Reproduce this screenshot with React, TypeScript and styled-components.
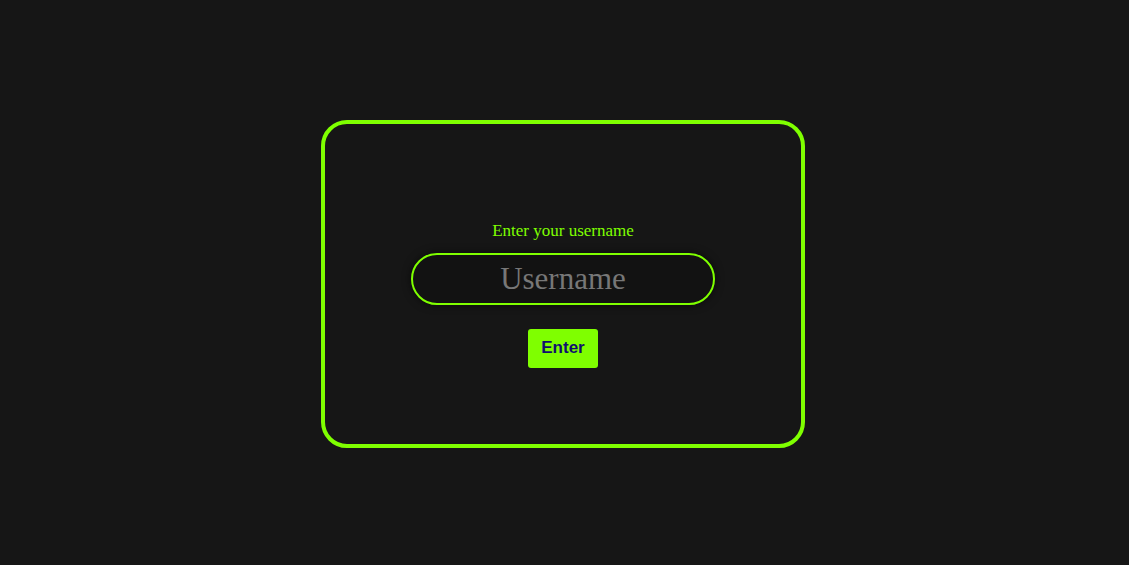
import React from "react";
import styled, { createGlobalStyle } from "styled-components";

const GlobalStyle = createGlobalStyle`
  html, body {
    margin: 0;
    padding: 0;
    background: #161616;
  }
`;

const Page = styled.div`
  width: 100vw;
  height: 100vh;
  display: flex;
  align-items: center;
  justify-content: center;
`;

const Card = styled.form`
  box-sizing: border-box;
  width: 484px;
  height: 328px;
  margin-top: 3px;
  margin-right: 3px;
  border: 4px solid #7fff00;
  border-radius: 26px;
  display: flex;
  flex-direction: column;
  align-items: center;
  justify-content: center;
  padding-top: 20px;
`;

const Label = styled.label`
  font-family: "Liberation Serif", serif;
  font-size: 17px;
  color: #7fff00;
  margin-bottom: 12px;
`;

const Input = styled.input`
  box-sizing: border-box;
  width: 304px;
  height: 52px;
  border: 2px solid #7fff00;
  border-radius: 26px;
  background: #121212;
  box-shadow: 0 0 8px rgba(0, 0, 0, 0.6);
  font-family: "Liberation Serif", serif;
  font-size: 31px;
  text-align: center;
  color: #ddd;
  outline: none;
  &::placeholder {
    color: #777;
  }
`;

const Button = styled.button`
  margin-top: 24px;
  width: 70px;
  height: 39px;
  border: none;
  border-radius: 3px;
  background: #7fff00;
  color: #10106e;
  font-family: "Liberation Sans", Arial, sans-serif;
  font-weight: bold;
  font-size: 17px;
  cursor: pointer;
`;

export default function App() {
  return (
    <>
      <GlobalStyle />
      <Page>
        <Card onSubmit={(e) => e.preventDefault()}>
          <Label htmlFor="username">Enter your username</Label>
          <Input id="username" placeholder="Username" />
          <Button type="submit">Enter</Button>
        </Card>
      </Page>
    </>
  );
}
